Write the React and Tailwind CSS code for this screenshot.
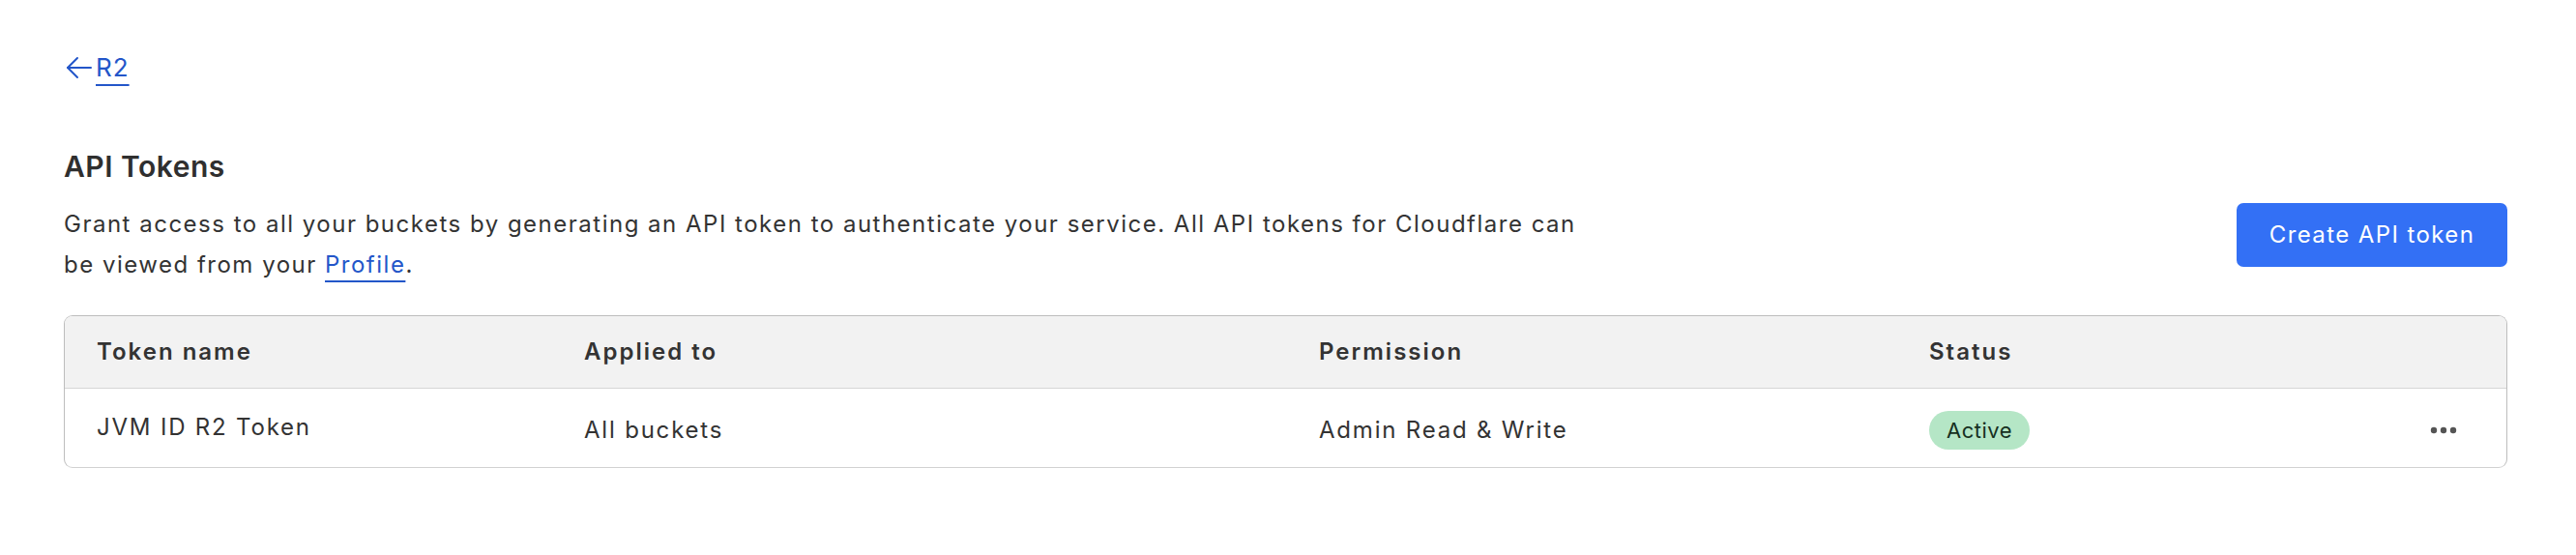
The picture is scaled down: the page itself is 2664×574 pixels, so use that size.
import React from "react";

const tokens = [
  {
    name: "JVM ID R2 Token",
    applied: "All buckets",
    permission: "Admin Read & Write",
    status: "Active",
  },
];

const BackArrow = () => (
  <svg width="27" height="24" viewBox="0 0 27 24" fill="none" stroke="currentColor" strokeWidth="2" strokeLinecap="round" strokeLinejoin="round">
    <path d="M26 12H2" />
    <path d="M12 2L2 12l10 10" />
  </svg>
);

const Dots = () => (
  <svg width="28" height="8" viewBox="0 0 28 8" fill="#555555">
    <circle cx="4" cy="4" r="3.2" />
    <circle cx="14" cy="4" r="3.2" />
    <circle cx="24" cy="4" r="3.2" />
  </svg>
);

export default function App() {
  return (
    <div className="min-h-[574px] bg-white pl-[66px] pr-[71px] pt-[52px] font-['Inter',sans-serif] text-[#333333] tracking-[1.5px]">
      {/* back link */}
      <a href="#" className="ml-[2px] flex items-center gap-[4px] text-[#2356c9] w-fit">
        <BackArrow />
        <span className="text-[26px] leading-[36px] tracking-[1px] underline decoration-2 underline-offset-[8px]">R2</span>
      </a>

      <h1 className="mt-[66px] text-[30px] leading-[36px] font-semibold tracking-[0.5px] text-[#2f2f2f]">API Tokens</h1>

      <div className="mt-[21px] flex items-start justify-between">
        <p className="max-w-[1590px] text-[24px] leading-[42px] text-[#333333]">
          Grant access to all your buckets by generating an API token to authenticate your service. All API tokens for
          Cloudflare can be viewed from your{" "}
          <a href="#" className="text-[#2356c9] underline decoration-2 underline-offset-[8px]">
            Profile
          </a>
          .
        </p>
        <button className="-mt-px h-[66px] w-[280px] shrink-0 rounded-[7px] bg-[#3370f5] text-[24px] tracking-[1.4px] text-white">
          Create API token
        </button>
      </div>

      {/* tokens table */}
      <div className="mt-[31px] overflow-hidden rounded-[9px] border border-[#bdbdbd] border-b-[#d2d2d2] tracking-[1.8px]">
        <div className="grid h-[75px] grid-cols-[504px_760px_631px_1fr_auto] items-center border-b border-[#d6d6d6] bg-[#f2f2f2] pl-[33px] pr-[52px] text-[24px] font-semibold tracking-[2px] text-[#333333]">
          <div>Token name</div>
          <div>Applied to</div>
          <div>Permission</div>
          <div>Status</div>
          <div className="w-[27px]" />
        </div>
        {tokens.map((t) => (
          <div
            key={t.name}
            className="grid h-[81px] grid-cols-[504px_760px_631px_1fr_auto] items-center pl-[33px] pr-[51px] pt-[5px] text-[24px] text-[#333333]"
          >
            <div className="pb-[7px]">{t.name}</div>
            <div>{t.applied}</div>
            <div>{t.permission}</div>
            <div>
              <span className="inline-flex h-[40px] items-center rounded-full bg-[#b5e6c6] px-[18px] text-[22px] tracking-[0.5px] text-[#16301f]">
                {t.status}
              </span>
            </div>
            <div className="flex items-center">
              <Dots />
            </div>
          </div>
        ))}
      </div>
    </div>
  );
}
